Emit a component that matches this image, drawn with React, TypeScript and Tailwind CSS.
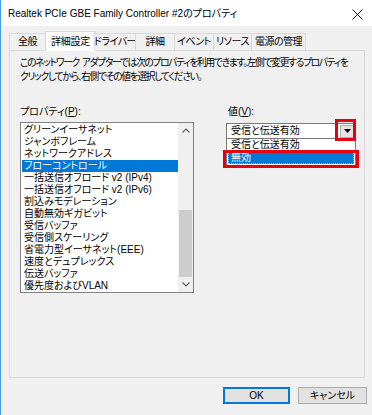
import React from "react";

const items = [
  "グリーンイーサネット",
  "ジャンボフレーム",
  "ネットワークアドレス",
  "フローコントロール",
  "一括送信オフロード v2 (IPv4)",
  "一括送信オフロード v2 (IPv6)",
  "割込みモデレーション",
  "自動無効ギガビット",
  "受信バッファ",
  "受信側スケーリング",
  "省電力型イーサネット(EEE)",
  "速度とデュプレックス",
  "伝送バッファ",
  "優先度およびVLAN",
];

const tabs = [
  { label: "全般", w: "w-[37px]" },
  { label: "詳細設定", w: "w-[51px]", active: true },
  { label: "ドライバー", w: "w-[42px]" },
  { label: "詳細", w: "w-[40px]" },
  { label: "イベント", w: "w-[40px]" },
  { label: "リソース", w: "w-[39px]" },
  { label: "電源の管理", w: "w-[55px]" },
];

export default function App() {
  return (
    <div className="flex h-[415px] w-[372px] flex-col overflow-hidden border-l border-[#4a9be0] bg-[#f0f0f0] font-['Liberation_Sans','Noto_Sans_CJK_JP',sans-serif] text-[10px] leading-[12px] text-black [font-feature-settings:'palt']">
      {/* title bar */}
      <div className="flex h-[26px] shrink-0 items-center justify-between bg-white pl-[7px] pr-[9px]">
        <span className="pt-[2px]">Realtek PCIe GBE Family Controller #2のプロパティ</span>
        <svg width="11" height="11" viewBox="0 0 11 11" className="mt-[2px]">
          <path d="M0.5 0.5 L10.5 10.5 M10.5 0.5 L0.5 10.5" stroke="#111" strokeWidth="1" />
        </svg>
      </div>

      <div className="px-[8px] pt-[5px]">
        {/* tabs */}
        <div className="relative z-10 flex h-[19px] items-end">
          {tabs.map((t, i) =>
            t.active ? (
              <div
                key={t.label}
                className={`-mx-[1px] -mb-px flex h-[20px] ${t.w} items-center justify-center whitespace-nowrap border border-b-0 border-[#d9d9d9] bg-white tracking-[-0.3px]`}
              >
                {t.label}
              </div>
            ) : (
              <div
                key={t.label}
                className={`flex h-[17px] ${t.w} items-center justify-center whitespace-nowrap border border-b-0 border-[#d9d9d9] bg-[#f0f0f0] tracking-[-0.5px] ${i > 0 ? "-ml-px" : ""}`}
              >
                {t.label}
              </div>
            )
          )}
        </div>

        {/* panel */}
        <div className="flex h-[328px] w-[356px] flex-col border border-[#d9d9d9] bg-[#f0f0f0] pl-[10px] pt-[5px]">
          <p className="whitespace-nowrap text-[9.7px] leading-[14px] tracking-[-1.25px]">
            このネットワーク&nbsp;&nbsp;アダプターでは次のプロパティを利用できます。左側で変更するプロパティを
            <br />
            クリックしてから、右側でその値を選択してください。
          </p>

          <div className="mt-[21px] flex gap-[32px]">
            {/* left column */}
            <div className="flex w-[174px] flex-col">
              <div className="h-[14px] leading-[14px]">
                プロパティ(<span className="underline">P</span>):
              </div>
              <div className="mt-[3px] flex h-[171px] border border-[#828282] bg-white">
                <div className="flex w-[157px] flex-col pl-px pt-px">
                  {items.map((it, i) => (
                    <div
                      key={it}
                      className={`h-[12px] whitespace-nowrap pl-[2px] leading-[12px] ${
                        i === 3 ? "bg-[#0078d7] text-white" : ""
                      }`}
                    >
                      {it}
                    </div>
                  ))}
                </div>
                <div className="flex w-[15px] flex-col bg-[#f0f0f0]">
                  <div className="flex h-[15px] items-center justify-center">
                    <svg width="8" height="5" viewBox="0 0 8 5">
                      <path d="M0.5 4.5 L4 1 L7.5 4.5" fill="none" stroke="#606060" strokeWidth="1.2" />
                    </svg>
                  </div>
                  <div className="flex flex-1 flex-col justify-end px-[1px]">
                    <div className="h-[67px] bg-[#cdcdcd]" />
                  </div>
                  <div className="flex h-[15px] items-center justify-center">
                    <svg width="8" height="5" viewBox="0 0 8 5">
                      <path d="M0.5 0.5 L4 4 L7.5 0.5" fill="none" stroke="#606060" strokeWidth="1.2" />
                    </svg>
                  </div>
                </div>
              </div>
            </div>

            {/* right column */}
            <div className="flex w-[130px] flex-col">
              <div className="h-[14px] pl-[2px] leading-[14px]">
                値(<span className="underline">V</span>):
              </div>
              <div className="relative mt-[4px]">
                <div className="flex h-[16px] items-center justify-between border border-[#7a7a7a] bg-white pl-[4px] pr-[1px]">
                  <span>受信と伝送有効</span>
                  <div className="flex h-[13px] w-[14px] items-center justify-center border border-[#adadad] bg-[#e5e5e5]">
                    <svg width="7" height="4" viewBox="0 0 7 4">
                      <path d="M0 0 H7 L3.5 4 Z" fill="#000" />
                    </svg>
                  </div>
                </div>

                {/* opened dropdown */}
                <div className="absolute left-0 top-[16px] flex h-[28px] w-[130px] flex-col border border-t-0 border-[#7a7a7a] bg-white">
                  <div className="h-[12px] pl-[4px] leading-[12px]">受信と伝送有効</div>
                  <div className="mx-px h-[13px] border border-dotted border-[#f5b24a] bg-[#0078d7] pl-[2px] leading-[11px] text-white">
                    無効
                  </div>
                </div>

                {/* red callouts */}
                <div className="absolute left-[109px] top-[-4px] h-[22px] w-[21px] border-[3px] border-[#e50012]" />
                <div className="absolute left-[-3px] top-[27px] h-[18px] w-[136px] border-[3px] border-[#e50012]" />
              </div>
            </div>
          </div>
        </div>

        {/* buttons */}
        <div className="mt-[9px] flex justify-end gap-[8px]">
          <button className="h-[17px] w-[67px] border-2 border-[#0078d7] bg-[#e1e1e1] leading-[12px]">OK</button>
          <button className="-mr-[3px] h-[17px] w-[69px] border border-[#adadad] bg-[#e1e1e1] leading-[12px]">キャンセル</button>
        </div>
      </div>
    </div>
  );
}
